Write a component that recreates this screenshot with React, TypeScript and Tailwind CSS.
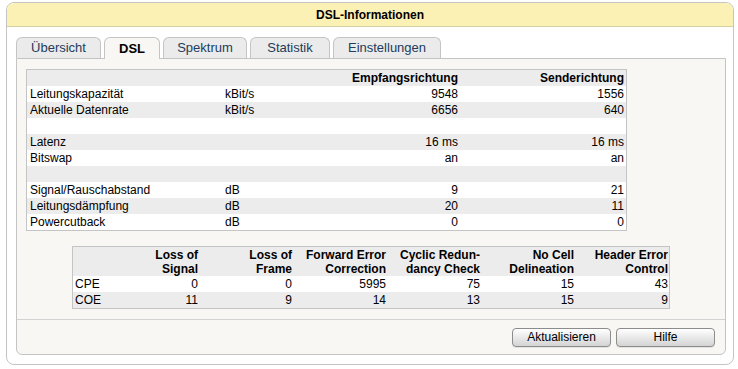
import React from "react";

// ── Data ──

const tabs = [
  { label: "Übersicht", w: "w-[85px]" },
  { label: "DSL", w: "w-[56px]", active: true },
  { label: "Spektrum", w: "w-[84px]" },
  { label: "Statistik", w: "w-[80px]" },
  { label: "Einstellungen", w: "w-[108px]" },
];

type LineRow = [string, string, string, string];

const lineRows: LineRow[] = [
  ["Leitungskapazität", "kBit/s", "9548", "1556"],
  ["Aktuelle Datenrate", "kBit/s", "6656", "640"],
  ["", "", "", ""],
  ["Latenz", "", "16 ms", "16 ms"],
  ["Bitswap", "", "an", "an"],
  ["", "", "", ""],
  ["Signal/Rauschabstand", "dB", "9", "21"],
  ["Leitungsdämpfung", "dB", "20", "11"],
  ["Powercutback", "dB", "0", "0"],
];

const errorHeads: [string, string][] = [
  ["Loss of", "Signal"],
  ["Loss of", "Frame"],
  ["Forward Error", "Correction"],
  ["Cyclic Redun-", "dancy Check"],
  ["No Cell", "Delineation"],
  ["Header Error", "Control"],
];

const errorRows: [string, number[]][] = [
  ["CPE", [0, 0, 5995, 75, 15, 43]],
  ["COE", [11, 9, 14, 13, 15, 9]],
];

// ── Pieces ──

function Tab({ label, w, active }: { label: string; w: string; active?: boolean }) {
  if (active) {
    return (
      <div
        className={`${w} h-[22px] -mb-px relative z-10 flex items-center justify-center border border-b-0 border-[#c4c4c4] rounded-t-[6px] bg-[#f8f7f3] font-bold text-[13px] text-black`}
      >
        {label}
      </div>
    );
  }
  return (
    <div
      className={`${w} h-[21px] flex items-center justify-center border border-b-0 border-[#c4c4c4] rounded-t-[6px] bg-[#ebebeb] text-[13px] text-[#233c5c]`}
    >
      {label}
    </div>
  );
}

function Button({ children }: { children: React.ReactNode }) {
  return (
    <button className="w-[99px] h-[19px] rounded-[4px] border border-[#8c8c8c] bg-linear-to-b from-white to-[#d4d4d4] text-[12px] leading-none text-black shadow-[0_1px_0_rgba(0,0,0,0.08)]">
      {children}
    </button>
  );
}

// ── App ──

export default function App() {
  return (
    <div className="w-[738px] h-[369px] bg-white pt-[2px] pl-[6px] font-['Liberation_Sans',Arial,sans-serif] text-[12px] text-black">
      <div className="w-[728px] h-[363px] border border-[#c4c4c4] rounded-[8px] overflow-hidden bg-white flex flex-col">
        {/* Title bar */}
        <div className="h-[24px] shrink-0 border-b border-[#d6cf9f] bg-[#fbf1b5] flex items-center justify-center font-bold text-[12px]">
          DSL-Informationen
        </div>

        <div className="pl-[9px] pt-[10px]">
          {/* Tabs */}
          <div className="flex items-end gap-[3px] h-[21px]">
            {tabs.map((t) => (
              <Tab key={t.label} {...t} />
            ))}
          </div>

          {/* Tab panel */}
          <div className="w-[710px] h-[297px] border border-[#c4c4c4] rounded-b-[6px] bg-[#f8f7f3] flex flex-col">
            <div className="pt-[10px] pl-[9px]">
              {/* Line table */}
              <div className="w-[601px] border border-[#c4c4c4] leading-[16px]">
                <div className="flex h-[16px] pl-[3px] pr-[2px] bg-[#ececec] font-bold">
                  <div className="w-[195px]" />
                  <div className="w-[100px]" />
                  <div className="w-[133px] text-right">Empfangsrichtung</div>
                  <div className="flex-1 text-right">Senderichtung</div>
                </div>
                {lineRows.map((r, i) => (
                  <div
                    key={i}
                    className={`flex h-[16px] pl-[3px] pr-[2px] ${i % 2 === 0 ? "bg-white" : "bg-[#ececec]"}`}
                  >
                    <div className="w-[195px]">{r[0]}</div>
                    <div className="w-[100px]">{r[1]}</div>
                    <div className="w-[133px] text-right">{r[2]}</div>
                    <div className="flex-1 text-right">{r[3]}</div>
                  </div>
                ))}
              </div>

              {/* Error counters */}
              <div className="w-[598px] ml-[46px] mt-[15px] border border-[#c4c4c4] leading-[14px]">
                <div className="flex h-[29px] pt-px pl-[2px] pr-px bg-[#ececec] font-bold">
                  <div className="w-[29px]" />
                  {errorHeads.map(([a, b]) => (
                    <div key={a + b} className="w-[94px] text-right">
                      {a}
                      <br />
                      {b}
                    </div>
                  ))}
                </div>
                {errorRows.map(([name, vals], i) => (
                  <div
                    key={name}
                    className={`flex h-[16px] leading-[16px] pl-[2px] pr-px ${i % 2 === 0 ? "bg-white" : "bg-[#ececec]"}`}
                  >
                    <div className="w-[29px]">{name}</div>
                    {vals.map((v, j) => (
                      <div key={j} className="w-[94px] text-right">
                        {v}
                      </div>
                    ))}
                  </div>
                ))}
              </div>
            </div>

            <div className="flex-1" />

            {/* Button bar */}
            <div className="h-[35px] shrink-0 border-t border-[#d2d2d2] flex items-center justify-end gap-[5px] pr-[10px]">
              <Button>Aktualisieren</Button>
              <Button>Hilfe</Button>
            </div>
          </div>
        </div>
      </div>
    </div>
  );
}
